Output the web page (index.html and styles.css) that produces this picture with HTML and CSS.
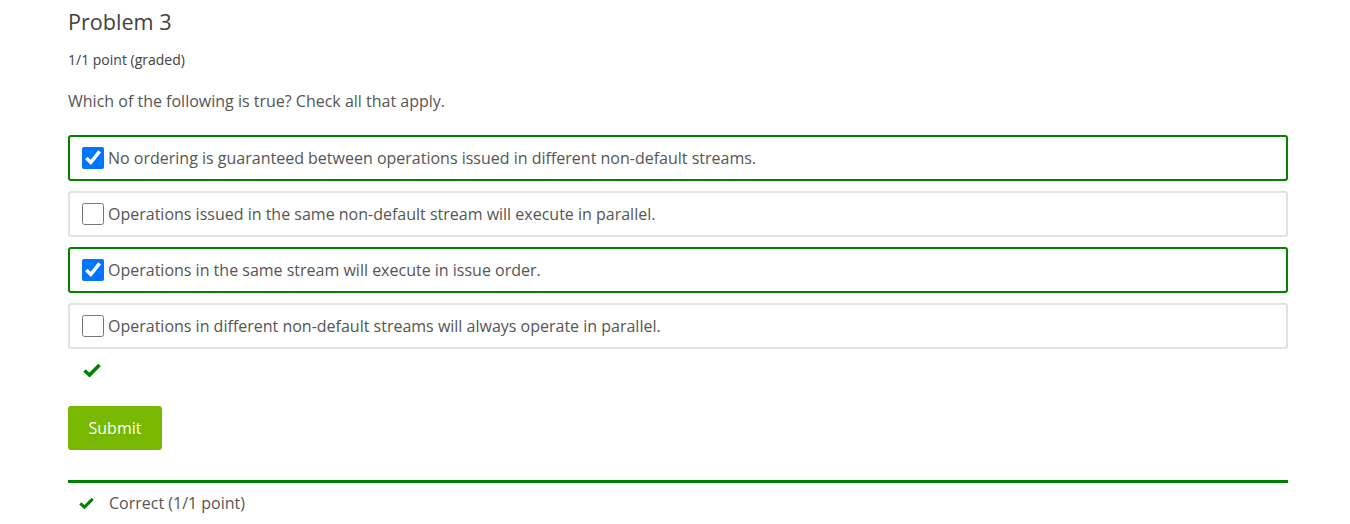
FILE: index.html
```html
<!DOCTYPE html>
<html>
<head>
<meta charset="utf-8">
<link rel="stylesheet" href="styles.css">
</head>
<body>
<div class="problem">
  <h3 class="title">Problem 3</h3>
  <div class="points">1/1 point (graded)</div>
  <p class="question">Which of the following is true? Check all that apply.</p>
  <div class="choices">
    <label class="choice correct"><input type="checkbox" checked><span>No ordering is guaranteed between operations issued in different non-default streams.</span></label>
    <label class="choice"><input type="checkbox"><span>Operations issued in the same non-default stream will execute in parallel.</span></label>
    <label class="choice correct"><input type="checkbox" checked><span>Operations in the same stream will execute in issue order.</span></label>
    <label class="choice"><input type="checkbox"><span>Operations in different non-default streams will always operate in parallel.</span></label>
  </div>
  <div class="status">
    <svg width="18" height="14" viewBox="0 0 18 14"><path d="M1.5 7.5 L6.5 12 L16.5 2" fill="none" stroke="#008100" stroke-width="3.6" stroke-linejoin="miter"/></svg>
  </div>
  <button class="submit">Submit</button>
  <div class="notification">
    <svg width="15" height="12" viewBox="0 0 18 14"><path d="M1.5 7.5 L6.5 12 L16.5 2" fill="none" stroke="#008100" stroke-width="3.6"/></svg>
    <span>Correct (1/1 point)</span>
  </div>
</div>
</body>
</html>
```
FILE: styles.css
```css
html, body {
  margin: 0;
  padding: 0;
  background: #fff;
}
body {
  font-family: "Open Sans", sans-serif;
  color: #555;
}
.problem {
  width: 1220px;
  margin-left: 68px;
  padding-top: 8px;
}
.title {
  margin: 0;
  font-size: 21.6px;
  font-weight: 400;
  line-height: 28px;
  color: #414141;
}
.points {
  margin-top: 16px;
  font-size: 14px;
  line-height: 16px;
  color: #414141;
}
.question {
  margin: 23px 0 0 0;
  font-size: 16px;
  line-height: 20px;
}
.choices {
  margin-top: 24px;
  display: flex;
  flex-direction: column;
  gap: 10px;
}
.choice {
  display: flex;
  align-items: center;
  height: 42px;
  border: 2px solid #e2e2e2;
  border-radius: 3px;
  padding-left: 12px;
  font-size: 16px;
}
.choice.correct {
  border-color: #008100;
}
.choice input {
  width: 22px;
  height: 22px;
  margin: 0 4px 0 0;
}
.status {
  height: 34px;
  padding-left: 15px;
  display: flex;
  align-items: center;
  padding-top: 4px;
}
.submit {
  margin-top: 19px;
  display: block;
  width: 94px;
  height: 44px;
  border: none;
  border-radius: 3px;
  background: #76b900;
  color: #fff;
  font-family: "Open Sans", sans-serif;
  font-size: 16px;
}
.notification {
  margin-top: 30px;
  border-top: 3px solid #008100;
  display: flex;
  align-items: center;
  gap: 15px;
  padding: 9px 0 0 11px;
  font-size: 16px;
}
```
